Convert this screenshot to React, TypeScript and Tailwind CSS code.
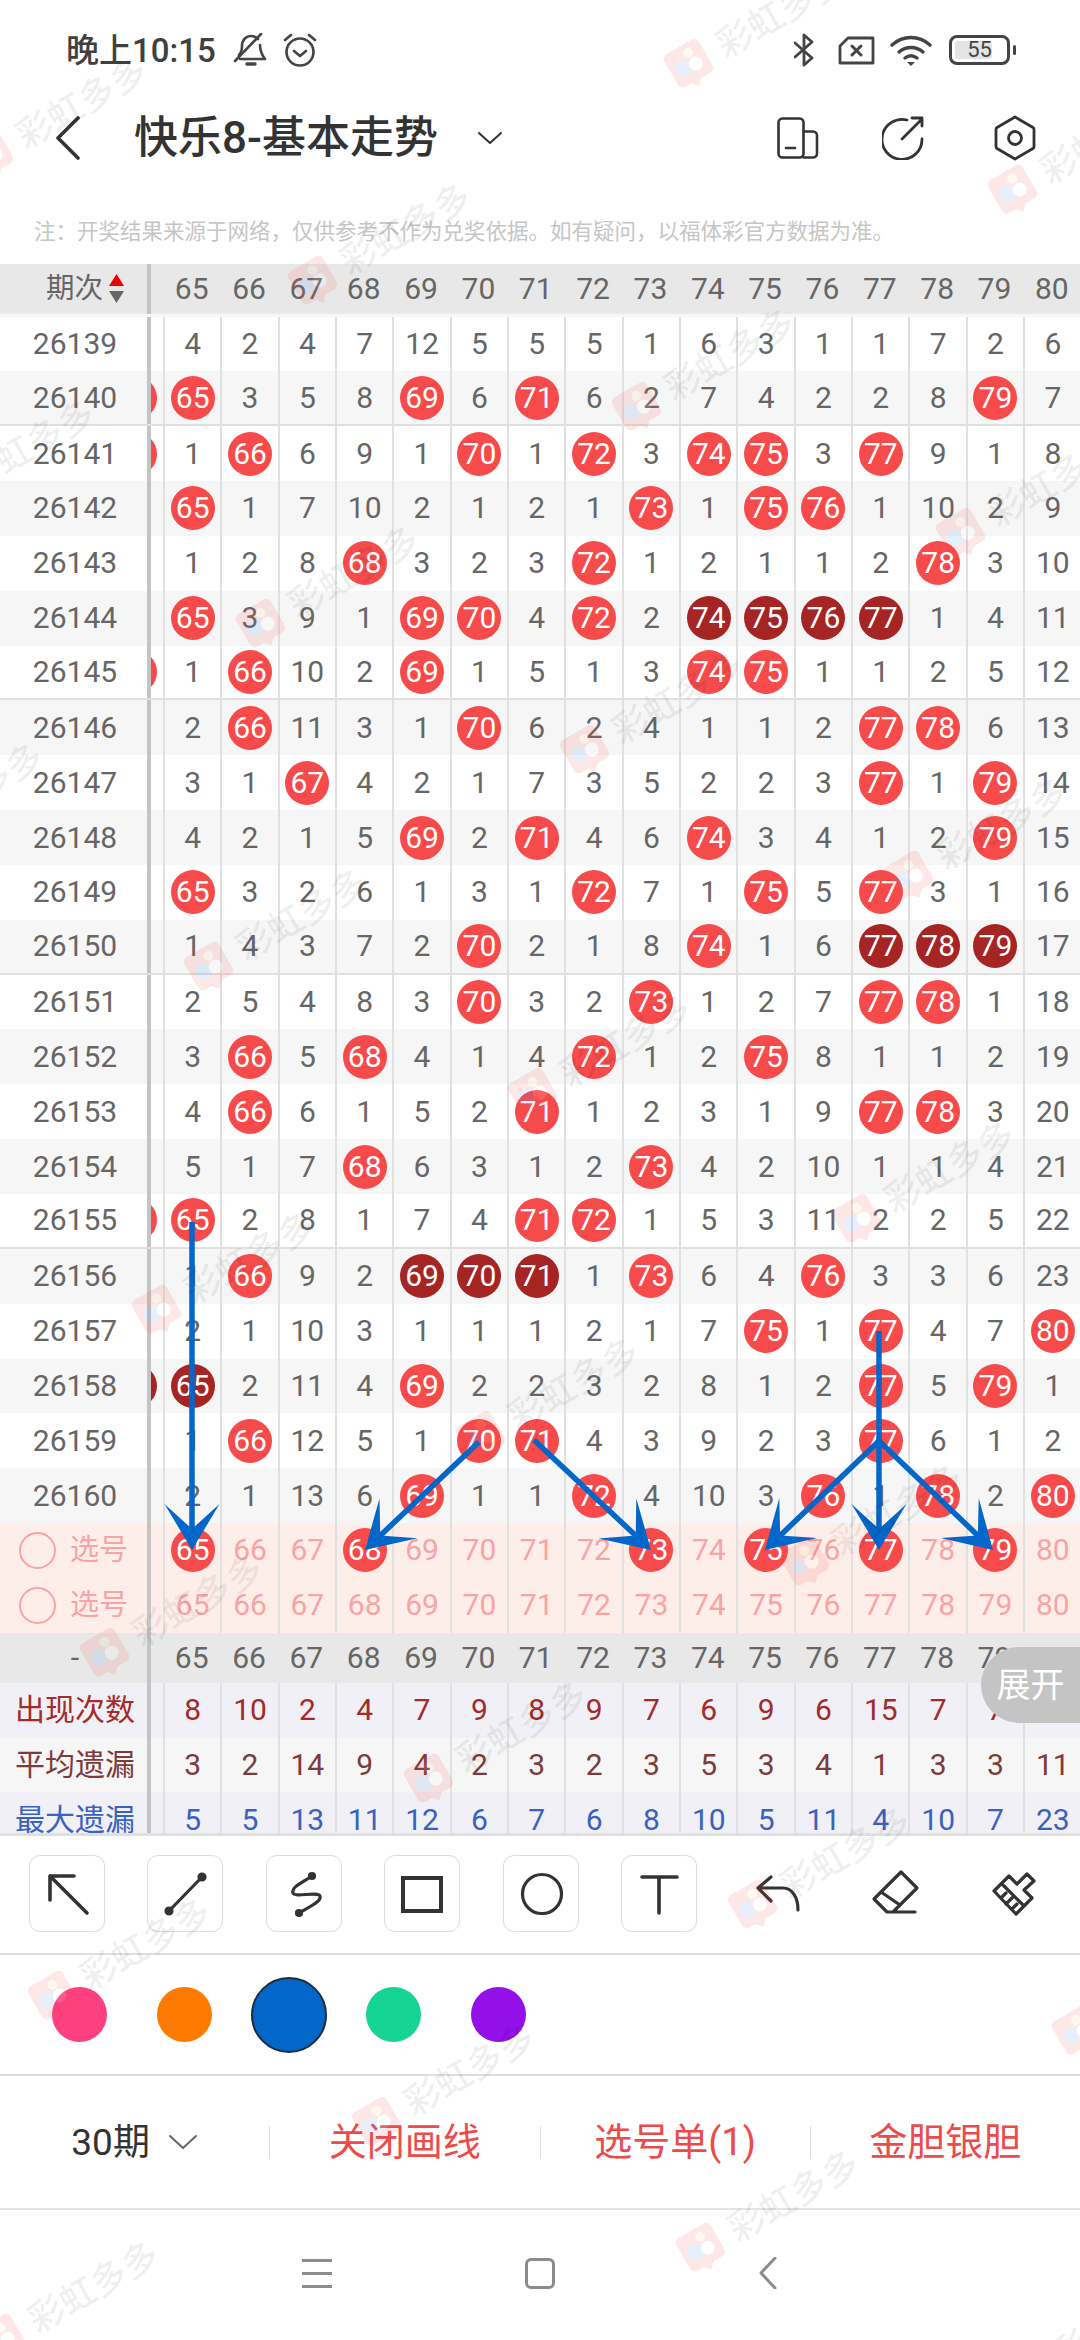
import clsx from "clsx";
import type { ReactNode } from "react";

const COLS = Array.from({ length: 17 }, (_, i) => 64 + i);

// first value of each row is the scrolled-off column 64, "d" marks a dark ball
const ROWS: [number, string][] = [
  [26139, "1 4 2 4 7 12 5 5 5 1 6 3 1 1 7 2 6"],
  [26140, "64 65 3 5 8 69 6 71 6 2 7 4 2 2 8 79 7"],
  [26141, "64 1 66 6 9 1 70 1 72 3 74 75 3 77 9 1 8"],
  [26142, "1 65 1 7 10 2 1 2 1 73 1 75 76 1 10 2 9"],
  [26143, "2 1 2 8 68 3 2 3 72 1 2 1 1 2 78 3 10"],
  [26144, "3 65 3 9 1 69 70 4 72 2 d74 d75 d76 d77 1 4 11"],
  [26145, "64 1 66 10 2 69 1 5 1 3 74 75 1 1 2 5 12"],
  [26146, "1 2 66 11 3 1 70 6 2 4 1 1 2 77 78 6 13"],
  [26147, "2 3 1 67 4 2 1 7 3 5 2 2 3 77 1 79 14"],
  [26148, "3 4 2 1 5 69 2 71 4 6 74 3 4 1 2 79 15"],
  [26149, "4 65 3 2 6 1 3 1 72 7 1 75 5 77 3 1 16"],
  [26150, "5 1 4 3 7 2 70 2 1 8 74 1 6 d77 d78 d79 17"],
  [26151, "6 2 5 4 8 3 70 3 2 73 1 2 7 77 78 1 18"],
  [26152, "7 3 66 5 68 4 1 4 72 1 2 75 8 1 1 2 19"],
  [26153, "8 4 66 6 1 5 2 71 1 2 3 1 9 77 78 3 20"],
  [26154, "9 5 1 7 68 6 3 1 2 73 4 2 10 1 1 4 21"],
  [26155, "64 65 2 8 1 7 4 71 72 1 5 3 11 2 2 5 22"],
  [26156, "1 1 66 9 2 d69 d70 d71 1 73 6 4 76 3 3 6 23"],
  [26157, "2 2 1 10 3 1 1 1 2 1 7 75 1 77 4 7 80"],
  [26158, "d64 d65 2 11 4 69 2 2 3 2 8 1 2 77 5 79 1"],
  [26159, "1 1 66 12 5 1 70 71 4 3 9 2 3 77 6 1 2"],
  [26160, "2 2 1 13 6 69 1 1 72 4 10 3 76 1 78 2 80"],
];

const PICKED = [65, 68, 73, 75, 77, 79];

const STATS = [
  {
    label: "出现次数",
    values: "1 8 10 2 4 7 9 8 9 7 6 9 6 15 7 7 4",
    color: "text-[#a52a2a]",
    bg: "bg-[#f0f0f6]",
  },
  {
    label: "平均遗漏",
    values: "1 3 2 14 9 4 2 3 2 3 5 3 4 1 3 3 11",
    color: "text-[#7d3b3b]",
    bg: "bg-[#f6f6f6]",
  },
  {
    label: "最大遗漏",
    values: "1 5 5 13 11 12 6 7 6 8 10 5 11 4 10 7 23",
    color: "text-[#3a62c0]",
    bg: "bg-[#f0f0f6]",
  },
];

const ARROWS = [
  { x1: 192, y1: 1222, x2: 192, y2: 1550 },
  { x1: 479, y1: 1442, x2: 365, y2: 1550 },
  { x1: 534, y1: 1440, x2: 651, y2: 1550 },
  { x1: 879, y1: 1441, x2: 765, y2: 1550 },
  { x1: 879, y1: 1331, x2: 879, y2: 1550 },
  { x1: 879, y1: 1441, x2: 993, y2: 1550 },
];

function Arrow({ x1, y1, x2, y2 }: { x1: number; y1: number; x2: number; y2: number }) {
  const len = Math.hypot(x2 - x1, y2 - y1);
  const ux = (x2 - x1) / len;
  const uy = (y2 - y1) / len;
  const at = (back: number, side: number) =>
    `${x2 - ux * back - uy * side},${y2 - uy * back + ux * side}`;
  return (
    <g fill="#0366c9" stroke="none">
      <line
        x1={x1}
        y1={y1}
        x2={x2 - ux * 20}
        y2={y2 - uy * 20}
        stroke="#0366c9"
        strokeWidth={5.5}
      />
      <polygon points={`${at(0, 0)} ${at(46, 27.5)} ${at(21, 0)} ${at(46, -27.5)}`} />
    </g>
  );
}

function Watermark({ x, y }: { x: number; y: number }) {
  return (
    <div
      className="absolute flex items-center gap-[14px] origin-[20px_20px] rotate-[-30deg] whitespace-nowrap"
      style={{ left: x - 17, top: y - 14 }}
    >
      <svg width="40" height="44" viewBox="0 0 40 44" className="opacity-[0.12]">
        <path d="M6 0h28a6 6 0 0 1 6 6v26a6 6 0 0 1-6 6H24l-6 6-5-6H6a6 6 0 0 1-6-6V6a6 6 0 0 1 6-6z" fill="#f04545" />
        <circle cx="13" cy="21" r="8" fill="#3d8bf5" />
        <circle cx="26" cy="23" r="7" fill="#ffffff" />
        <circle cx="25" cy="10" r="5" fill="#ffd08a" />
      </svg>
      <span className="text-[36px] leading-[40px] font-medium text-[#000000]/[0.07]">彩虹多多</span>
    </div>
  );
}

function Ball({ value, dark }: { value?: string; dark: boolean }) {
  return (
    <span
      className={clsx(
        "flex h-[44px] w-[44px] items-center justify-center rounded-full text-white",
        dark ? "bg-[#a52424]" : "bg-[#f74a4a]",
      )}
    >
      {value}
    </span>
  );
}

function Row({
  left,
  className,
  divider,
  height = "h-[54.85px]",
  lines = true,
  children,
}: {
  left: ReactNode;
  className: string;
  divider?: boolean;
  height?: string;
  lines?: boolean;
  children: ReactNode;
}) {
  return (
    <div className={clsx("flex", height, className, divider && "border-b-[2.5px] border-[#e0e0e0]")}>
      <div className="flex w-[147px] shrink-0 items-center justify-center pl-[3px]">{left}</div>
      <div className="w-[4px] shrink-0 bg-[#c4c4c4]" />
      <div className="min-w-0 flex-1 overflow-hidden">
        <div className={clsx("ml-[-45.35px] flex h-full w-[1000px]", lines && "[&>div]:border-l-2 [&>div]:border-[#e0e0e0]")}>
          {children}
        </div>
      </div>
    </div>
  );
}

function Cell({ children }: { children?: ReactNode }) {
  return <div className="flex h-full w-[57.35px] shrink-0 items-center justify-center">{children}</div>;
}

function DrawTool({ boxed = true, children }: { boxed?: boolean; children: ReactNode }) {
  return (
    <div className={clsx("h-[77px] w-[76px] shrink-0 rounded-[11px]", boxed && "border border-[#dcdcdc]")}>
      <svg
        width="76"
        height="77"
        viewBox="0 0 76 77"
        fill="none"
        stroke="#333333"
        strokeWidth="3.2"
        strokeLinecap="round"
        strokeLinejoin="round"
      >
        {children}
      </svg>
    </div>
  );
}

function Swatch({ className }: { className: string }) {
  return <div className={clsx("shrink-0 rounded-full", className)} />;
}

export default function App() {
  const marks: { x: number; y: number }[] = [];
  for (let i = -1; i <= 3; i++) {
    for (let k = -1; k <= 6; k++) {
      marks.push({ x: 310 - 52 * k + 324 * i, y: 275 + 343 * k + 126 * i });
    }
  }

  return (
    <div className="relative flex h-[2340px] w-[1080px] flex-col overflow-hidden bg-white font-[Roboto,'Noto_Sans_CJK_SC',sans-serif] text-[#666666]">
      {/* Status bar */}
      <div className="flex h-[100px] shrink-0 items-center pl-[66px] pr-[64px] text-[#404040]">
        <span className="text-[33px] font-medium leading-none">晚上10:15</span>
        <svg className="ml-[17px]" width="34" height="34" viewBox="0 0 34 34" fill="none" stroke="#444444" strokeWidth="2.6" strokeLinecap="round" strokeLinejoin="round">
          <path d="M6 22c2-2 3-5 3-9 0-6 4-10 9-10 3 0 5 1 7 3" />
          <path d="M27 12c0 5 2 10 5 14H7" />
          <path d="M2 28L28 1" />
          <path d="M14 31h8" strokeWidth="3.4" />
        </svg>
        <svg className="ml-[15px]" width="36" height="34" viewBox="0 0 36 34" fill="none" stroke="#444444" strokeWidth="2.6" strokeLinecap="round" strokeLinejoin="round">
          <circle cx="18" cy="19" r="13.5" />
          <path d="M12 18l6 5 6-5" />
          <path d="M3 7l6-5M33 7l-6-5" />
        </svg>
        <div className="ml-auto flex items-center">
          <svg width="20" height="34" viewBox="0 0 20 34" fill="none" stroke="#444444" strokeWidth="2.8" strokeLinecap="round" strokeLinejoin="round">
            <path d="M1 10l17 15-8 7V2l8 7L1 24" />
          </svg>
          <svg className="ml-[24px]" width="37" height="29" viewBox="0 0 37 29" fill="none" stroke="#444444" strokeWidth="2.8" strokeLinecap="round" strokeLinejoin="round">
            <path d="M10 2h25v25H2V10z" />
            <path d="M14 10l9 9M23 10l-9 9" strokeWidth="3" />
          </svg>
          <svg className="ml-[15px]" width="42" height="31" viewBox="0 0 42 31" fill="none" stroke="#444444" strokeWidth="3.4" strokeLinecap="round">
            <path d="M2 10c11-10 27-10 38 0" />
            <path d="M9 17c7-6 17-6 24 0" />
            <path d="M15 23c4-3 8-3 12 0" />
            <path d="M21 31l-4-4h8z" fill="#444444" stroke="none" />
          </svg>
          <div className="ml-[17px] flex items-center">
            <div className="relative flex h-[30px] w-[61px] items-center justify-center rounded-[8px] border-[3px] border-[#444444]">
              <div className="absolute bottom-[3px] left-[3px] top-[3px] w-[37px] rounded-[3px] bg-[#e4e4e4]" />
              <span className="relative text-[22px] leading-none text-[#444444]">55</span>
            </div>
            <div className="ml-[3px] h-[10px] w-[3px] rounded-full bg-[#444444]" />
          </div>
        </div>
      </div>

      {/* Title bar */}
      <div className="flex h-[76px] shrink-0 items-center pl-[55px] text-[#333333]">
        <svg width="25" height="44" viewBox="0 0 25 44" fill="none" stroke="#333333" strokeWidth="3.6" strokeLinecap="round" strokeLinejoin="round">
          <path d="M23 2L3 22l20 20" />
        </svg>
        <span className="ml-[54px] text-[44px] font-medium leading-none">快乐8-基本走势</span>
        <svg className="ml-[39px]" width="26" height="14" viewBox="0 0 26 14" fill="none" stroke="#333333" strokeWidth="2" strokeLinecap="round" strokeLinejoin="round">
          <path d="M2 2l11 10L24 2" />
        </svg>
        <div className="ml-auto flex items-center pr-[44px]">
          <svg width="42" height="42" viewBox="0 0 42 42" fill="none" stroke="#333333" strokeWidth="2.6" strokeLinecap="round" strokeLinejoin="round">
            <rect x="1.5" y="1.5" width="25" height="39" rx="4" />
            <path d="M26.5 14.5H36a4 4 0 0 1 4 4V36.5a4 4 0 0 1-4 4H26.5" />
            <path d="M9 31h9" />
          </svg>
          <svg className="ml-[63px]" width="42" height="44" viewBox="0 0 42 44" fill="none" stroke="#333333" strokeWidth="2.8" strokeLinecap="round" strokeLinejoin="round">
            <path d="M25 4a20 20 0 1 0 15 19" />
            <path d="M20 23L40 3M30 2h10v8" />
          </svg>
          <svg className="ml-[70px]" width="42" height="46" viewBox="0 0 42 46" fill="none" stroke="#333333" strokeWidth="2.8" strokeLinecap="round" strokeLinejoin="round">
            <path d="M21 2l18 10.5a2 2 0 0 1 1 1.7v17.6a2 2 0 0 1-1 1.7L21 44 3 33.5a2 2 0 0 1-1-1.7V14.2a2 2 0 0 1 1-1.7z" />
            <circle cx="21" cy="23" r="6.5" />
          </svg>
        </div>
      </div>

      {/* Disclaimer */}
      <div className="flex h-[88px] shrink-0 items-center pl-[34px] pt-[24px] text-[21.5px] leading-none text-[#c6c6c6]">
        注：开奖结果来源于网络，仅供参考不作为兑奖依据。如有疑问，以福体彩官方数据为准。
      </div>

      {/* Trend table */}
      <div className="relative h-[1569px] shrink-0 overflow-hidden text-[30px] leading-none">
        <Row
          height="h-[52.5px]"
          className="border-b-[3.5px] border-[#f6f6f6] bg-[#e8e8e8]"
          lines={false}
          left={
            <div className="flex items-center pl-[20px]">
              <span className="text-[28.5px]">期次</span>
              <svg className="ml-[6px]" width="15" height="29" viewBox="0 0 15 29">
                <path d="M7.5 0L15 12H0z" fill="#ee0000" />
                <path d="M0 17h15L7.5 29z" fill="#666666" />
              </svg>
            </div>
          }
        >
          {COLS.map((c) => (
            <Cell key={c}>{c === 64 ? null : c}</Cell>
          ))}
        </Row>

        {ROWS.map(([issue, values], r) => (
          <Row
            key={issue}
            className={r % 2 === 0 ? "bg-white" : "bg-[#f6f6f6]"}
            divider={issue % 5 === 0 && issue !== 26160}
            left={issue}
          >
            {values.split(" ").map((v, c) => {
              const num = v.replace("d", "");
              const isBall = Number(num) === COLS[c];
              if (isBall) {
                return (
                  <Cell key={c}>
                    <Ball value={c === 0 ? undefined : num} dark={v.startsWith("d")} />
                  </Cell>
                );
              }
              return <Cell key={c}>{c === 0 ? null : num}</Cell>;
            })}
          </Row>
        ))}

        {[0, 1].map((n) => (
          <Row
            key={n}
            className="bg-[#feeee9] text-[#f9a4a4]"
            left={
              <div className="mr-[3px] flex items-center gap-[14px]">
                <span className="h-[37px] w-[37px] rounded-full border-2 border-[#f9a4a4]" />
                <span className="text-[29px]">选号</span>
              </div>
            }
          >
            {COLS.map((c) => (
              <Cell key={c}>
                {c === 64 ? null : n === 0 && PICKED.includes(c) ? <Ball value={String(c)} dark={false} /> : c}
              </Cell>
            ))}
          </Row>
        ))}

        <Row height="h-[50px]" className="bg-[#e8e8e8]" lines={false} left="-">
          {COLS.map((c) => (
            <Cell key={c}>{c === 64 ? null : c}</Cell>
          ))}
        </Row>

        {STATS.map((s) => (
          <Row key={s.label} className={clsx(s.bg, s.color)} left={<span className="text-[30px]">{s.label}</span>}>
            {s.values.split(" ").map((v, c) => (
              <Cell key={c}>{c === 0 ? null : v}</Cell>
            ))}
          </Row>
        ))}

        {/* Expand tab */}
        <div className="absolute right-0 top-[1383px] flex h-[76px] w-[99px] items-center justify-center rounded-l-[38px] bg-[#c4c4c4] text-[34px] text-white">
          展开
        </div>
      </div>

      {/* Drawing tools */}
      <div className="flex h-[122px] shrink-0 gap-[42.55px] border-b-2 border-t-[3px] border-b-[#dedede] border-t-[#e0e0e0] pl-[28.5px] pt-[19px]">
        <DrawTool>
          <path d="M20 44V20h24M20 20l37 37" strokeWidth="3.6" />
        </DrawTool>
        <DrawTool>
          <path d="M21 55L54 21" />
          <circle cx="54" cy="21" r="3" fill="#333333" />
          <circle cx="21" cy="55" r="3" fill="#333333" />
        </DrawTool>
        <DrawTool>
          <path d="M45 20C36 26 24 31 26 37C28 42 50 35 53 40C55 46 40 52 32 57" />
          <circle cx="45" cy="20" r="2.5" fill="#333333" />
          <circle cx="32" cy="57" r="2.5" fill="#333333" />
        </DrawTool>
        <DrawTool>
          <rect x="18" y="22" width="38" height="33" strokeWidth="4" strokeLinejoin="miter" />
        </DrawTool>
        <DrawTool>
          <circle cx="38" cy="38" r="19.5" />
        </DrawTool>
        <DrawTool>
          <path d="M20 21h35M37 21v36" strokeWidth="3.6" />
        </DrawTool>
        <DrawTool boxed={false}>
          <path d="M31 22L18 33l13 13M18 33h25c9 0 15 9 15 22" />
        </DrawTool>
        <DrawTool boxed={false}>
          <path d="M43 17l16 16-24 24h-6L16 44zM23 37l19 13M29 57h28" />
        </DrawTool>
        <DrawTool boxed={false}>
          <path d="M17 36l15-15 8 8 10-10 7 7-10 9 8 8-16 16zM25 29l22 22M24 43l5-5M29 49l8-8M35 54l5-5" />
        </DrawTool>
      </div>

      {/* Pen colours */}
      <div className="flex h-[121px] shrink-0 items-center gap-[50px] border-b-2 border-[#dedede] pl-[52px]">
        <Swatch className="h-[55px] w-[55px] bg-[#fe4080]" />
        <Swatch className="h-[55px] w-[55px] bg-[#ff7a00]" />
        <Swatch className="mx-[-11px] h-[76px] w-[76px] border-2 border-[#1f2d3d] bg-[#0366c9]" />
        <Swatch className="h-[55px] w-[55px] bg-[#16d494]" />
        <Swatch className="h-[55px] w-[55px] bg-[#9310e8]" />
      </div>

      {/* Actions */}
      <div className="flex h-[134px] shrink-0 items-center border-b-2 border-[#e4e4e4] text-[38px] leading-none text-[#ec4b4b]">
        <div className="flex flex-1 items-center justify-center gap-[18px] text-[37px] text-[#333333]">
          <span>30期</span>
          <svg width="30" height="16" viewBox="0 0 30 16" fill="none" stroke="#666666" strokeWidth="2" strokeLinecap="round" strokeLinejoin="round">
            <path d="M2 2l13 12L28 2" />
          </svg>
        </div>
        <div className="h-[33px] w-px bg-[#e0e0e0]" />
        <div className="flex-1 text-center">关闭画线</div>
        <div className="h-[33px] w-px bg-[#e0e0e0]" />
        <div className="flex-1 text-center">选号单(1)</div>
        <div className="h-[33px] w-px bg-[#e0e0e0]" />
        <div className="flex-1 text-center">金胆银胆</div>
      </div>

      {/* Navigation bar */}
      <div className="flex flex-1 items-center pl-[302px] pb-[4px]">
        <div className="flex h-[29px] w-[30px] flex-col justify-between">
          <div className="h-[3px] bg-[#8c8c8c]" />
          <div className="h-[3px] bg-[#8c8c8c]" />
          <div className="h-[3px] bg-[#8c8c8c]" />
        </div>
        <div className="ml-[193px] h-[31px] w-[30px] rounded-[6px] border-[3px] border-[#8c8c8c]" />
        <svg className="ml-[204px]" width="18" height="32" viewBox="0 0 18 32" fill="none" stroke="#8c8c8c" strokeWidth="3" strokeLinecap="round" strokeLinejoin="round">
          <path d="M16 1L2 16l14 15" />
        </svg>
      </div>

      {/* Overlays: the user's drawn arrows and the app's watermark */}
      <svg className="pointer-events-none absolute inset-0" width="1080" height="2340" viewBox="0 0 1080 2340">
        {ARROWS.map((a, i) => (
          <Arrow key={i} {...a} />
        ))}
      </svg>
      <div className="pointer-events-none absolute inset-0">
        {marks.map((m, i) => (
          <Watermark key={i} x={m.x} y={m.y} />
        ))}
      </div>
    </div>
  );
}
